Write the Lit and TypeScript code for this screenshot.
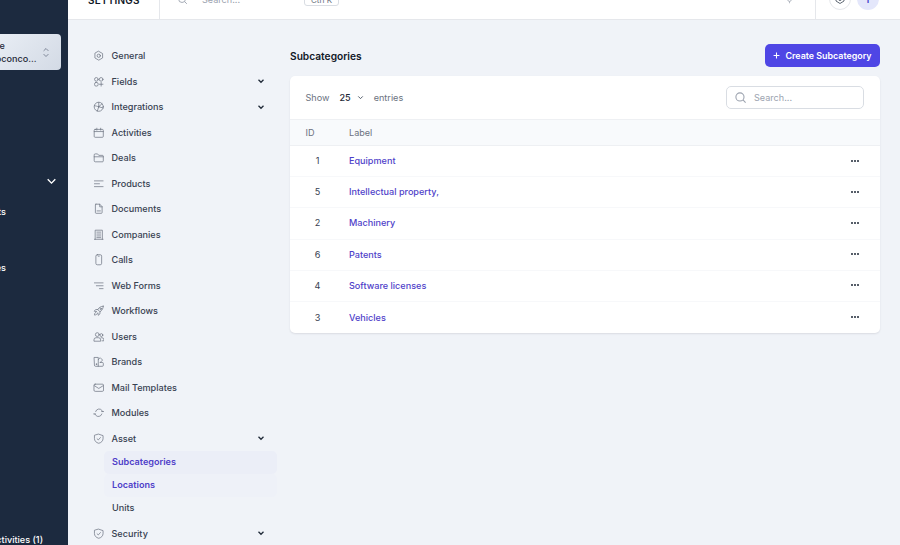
import { LitElement, html, css, svg } from "lit";
import { customElement } from "lit/decorators.js";

const icons: Record<string, unknown> = {
  gear: svg`<path d="M12 2.800l8 4.600v9.200l-8 4.600-8-4.600V7.400z"/><circle cx="12" cy="12" r="3.400"/>`,
  fields: svg`<circle cx="7" cy="7" r="3.800"/><circle cx="17" cy="7" r="3.800"/><rect x="3.200" y="13.500" width="7.500" height="7.500" rx="3"/><path d="M17 13.500v7.500M13.300 17.200h7.500"/>`,
  globe: svg`<circle cx="12" cy="12" r="9.500"/><path d="M12 12l7-6.500M12 12l9 2.500M12 12l-3 9M3 10c3 0 5 1 9 2M12 3v9"/>`,
  calendar: svg`<rect x="2.500" y="5" width="19" height="16.500" rx="2"/><path d="M2.500 9.500h19M8 2.500v4M16 2.500v4"/>`,
  folder: svg`<path d="M2.500 7V6a2 2 0 0 1 2-2h5l2.500 3h7.500a2 2 0 0 1 2 2v9.500a2 2 0 0 1-2 2h-15a2 2 0 0 1-2-2z"/><path d="M2.500 10h19"/>`,
  lines: svg`<path d="M3 6h18M3 12h10.500M3 18h18"/>`,
  doc: svg`<path d="M6 2.500h8l5 5V20a1.500 1.500 0 0 1-1.500 1.500h-11A1.500 1.500 0 0 1 5 20V4a1.500 1.500 0 0 1 1-1.500z"/><path d="M14 2.500V8h5M8.500 16.500h7"/>`,
  building: svg`<path d="M4.500 21.500V2.500h15v19M3 21.500h18M8 6.500h8M8 10.500h8M8 14.500h8M8 18h8"/>`,
  phone: svg`<rect x="6" y="1.500" width="12" height="21" rx="3"/><path d="M11 4.500h2"/>`,
  forms: svg`<path d="M3 6h18M7 12h14M13.500 18H21"/>`,
  rocket: svg`<path d="M21.500 2.500c-5 .3-9 2.500-11.500 7l4.500 4.500c4.500-2.500 6.700-6.500 7-11.500z"/><circle cx="16" cy="8" r="1.500"/><path d="M10 9.500H5.500L2.500 13l5 .8M14.500 14v4.500L11 21.500l-.8-5M6 15c-2 1-3 3.500-3 6 2.500 0 5-1 6-3"/>`,
  users: svg`<circle cx="9" cy="7.500" r="4"/><circle cx="17.500" cy="8.500" r="3"/><path d="M2 20.500v-2a4.500 4.500 0 0 1 4.500-4.500h5a4.500 4.500 0 0 1 4.500 4.500v2zM17 14h1.500a4 4 0 0 1 4 4v2.500H19"/>`,
  brands: svg`<path d="M3 3h8v18.500H5a2 2 0 0 1-2-2zM11 7.500l4-4 5 5-5.500 5.500M11 21.500h8.500a2 2 0 0 0 2-2v-4a2 2 0 0 0-2-2h-4"/><circle cx="7" cy="17" r=".8"/>`,
  mail: svg`<rect x="2" y="4.500" width="20" height="15" rx="2.500"/><path d="M2.500 7.500l9.500 6 9.500-6"/>`,
  sync: svg`<path d="M5.500 9.500a7.500 7.500 0 0 1 13-2.500l2 2.500M18.500 14.500a7.500 7.500 0 0 1-13 2.500l-2-2.500"/><path d="M22 9.500h-4M1.500 14.500h4"/>`,
  shield: svg`<path d="M12 2.500l9 3v6c0 5-3.500 8.500-9 10-5.500-1.500-9-5-9-10v-6z"/><path d="M8.500 12l2.500 2.500 4.500-5"/>`,
};

const navTop = [
  ["General", "gear", false],
  ["Fields", "fields", true],
  ["Integrations", "globe", true],
  ["Activities", "calendar", false],
  ["Deals", "folder", false],
  ["Products", "lines", false],
  ["Documents", "doc", false],
  ["Companies", "building", false],
  ["Calls", "phone", false],
  ["Web Forms", "forms", false],
  ["Workflows", "rocket", false],
  ["Users", "users", false],
  ["Brands", "brands", false],
  ["Mail Templates", "mail", false],
  ["Modules", "sync", false],
] as const;

const rows = [
  [1, "Equipment"],
  [5, "Intellectual property,"],
  [2, "Machinery"],
  [6, "Patents"],
  [4, "Software licenses"],
  [3, "Vehicles"],
];

const chevron = html`<svg class="chev" viewBox="0 0 24 24"><path d="M6 9l6 6 6-6" /></svg>`;
const search = html`<svg class="search-ic" viewBox="0 0 24 24"><circle cx="11" cy="11" r="7.500" /><path d="M16.500 16.500L21.500 21.500" /></svg>`;

@customElement("app-root")
export class AppRoot extends LitElement {
  static styles = css`
    :host {
      display: block;
      width: 900px;
      height: 545px;
      overflow: hidden;
      font-family: Inter, "Liberation Sans", sans-serif;
      font-size: 9.100px;
      color: #374151;
      background: #f0f3f8;
    }

    .page {
      display: grid;
      grid-template-columns: 68px 1fr;
      height: 565px;
      margin-top: -20px;
    }

    /* dark rail, mostly cut off on the left */
    .rail {
      background: #1c2a3f;
      color: #fff;
      overflow: hidden;
      display: flex;
      flex-direction: column;
      align-items: flex-end;
      font-weight: 500;
    }
    .account {
      width: 68px;
      height: 36px;
      margin-top: 54px;
      padding-right: 7.500px;
      box-sizing: border-box;
      display: flex;
      justify-content: flex-end;
      flex: none;
    }
    .account-card {
      flex: none;
      width: 100%;
      background: linear-gradient(135deg, #e8edf4, #d3dae5);
      border-radius: 0 4px 4px 0;
      color: #1f2937;
      display: flex;
      align-items: center;
      gap: 5px;
      justify-content: flex-end;
      padding-right: 11px;
      box-sizing: border-box;
      overflow: hidden;
    }
    .account-text {
      flex: none;
      line-height: 13px;
    }
    .account-text span {
      display: block;
      white-space: nowrap;
    }
    .updown {
      width: 8px;
      height: 11px;
      flex: none;
      fill: none;
      stroke: #7b8494;
      stroke-width: 1.200;
    }
    .rail-chev {
      width: 13px;
      height: 13px;
      fill: none;
      stroke: #fff;
      stroke-width: 2.600;
      margin: 105px 10.500px 0 0;
      flex: none;
    }
    .rail-item {
      white-space: nowrap;
      line-height: 12px;
      flex: none;
    }
    .r1 { margin: 17.500px 62px 0 0; }
    .r2 { margin: 44px 62px 0 0; }
    .r3 { margin: 260px 25px 0 0; }

    .main {
      display: grid;
      grid-template-rows: 40px 1fr;
      min-width: 0;
    }

    .top {
      background: #fff;
      border-bottom: 1px solid #e5e7eb;
      display: flex;
      align-items: center;
      box-sizing: border-box;
      color: #111827;
    }
    .title {
      width: 92px;
      box-sizing: border-box;
      padding-left: 20px;
      font-weight: 600;
      font-size: 10px;
      letter-spacing: 0.200px;
      align-self: stretch;
      display: flex;
      align-items: center;
      border-right: 1px solid #e5e7eb;
    }
    .top-search {
      display: flex;
      align-items: center;
      flex: 1;
      padding-left: 17px;
      color: #9ca3af;
    }
    .top-search .search-ic {
      width: 11px;
      height: 11px;
      margin-right: 14px;
    }
    .top-search .kbd {
      margin-left: 64px;
      width: 35px;
      height: 13px;
      border: 1px solid #d9dde3;
      border-radius: 3px;
      text-align: center;
      line-height: 13px;
      font-size: 8px;
      box-sizing: border-box;
      color: #6b7280;
    }
    .bug {
      width: 9px;
      height: 9px;
      margin-right: 21px;
      fill: none;
      stroke: #9ca3af;
      stroke-width: 2;
    }
    .top-right {
      align-self: stretch;
      border-left: 1px solid #e5e7eb;
      display: flex;
      align-items: center;
      gap: 6px;
      padding: 0 21px 0 13px;
    }
    .circle {
      width: 22px;
      height: 22px;
      border-radius: 50%;
      box-sizing: border-box;
      display: flex;
      align-items: center;
      justify-content: center;
      margin-top: -1px;
    }
    .circle.light {
      border: 1px solid #e5e7eb;
      background: #fff;
    }
    .circle.avatar {
      background: #e4e7fb;
      color: #4338ca;
      font-weight: 600;
    }
    .circle svg {
      width: 12px;
      height: 12px;
      fill: none;
      stroke: #374151;
      stroke-width: 1.600;
    }

    .body {
      display: grid;
      grid-template-columns: 222px 1fr;
      min-height: 0;
      overflow: hidden;
    }

    .settings {
      padding: 23px 0 0 24px;
      font-weight: 500;
    }
    .nav-row {
      display: flex;
      align-items: center;
      height: 25.500px;
      color: #374151;
    }
    .nav-row .ic {
      width: 11.500px;
      height: 11.500px;
      fill: none;
      stroke: #6b7280;
      stroke-width: 1.500;
      margin-left: 0.500px;
      margin-right: 7.500px;
      flex: none;
      stroke-linecap: round;
      stroke-linejoin: round;
    }
    .nav-row span {
      flex: 1;
    }
    .chev {
      width: 10px;
      height: 10px;
      fill: none;
      stroke: #1f2937;
      stroke-width: 3;
      margin-right: 24px;
      flex: none;
    }
    .sub {
      display: flex;
      flex-direction: column;
      margin: -0.500px 13px 1px 12px;
    }
    .sub div {
      height: 23px;
      line-height: 22px;
      padding-left: 8px;
      border-radius: 5px;
    }
    .sub .on {
      color: #4f3fc9;
      font-weight: 600;
    }
    .sub .cur {
      background: #ebeef7;
    }
    .sub .hov {
      background: #eef1f8;
    }

    .content {
      padding: 24px 20px 0 0;
    }
    .head {
      display: flex;
      align-items: center;
      justify-content: space-between;
      height: 23px;
      margin-bottom: 9px;
    }
    .head h1 {
      margin: 0;
      font-size: 10.200px;
      font-weight: 600;
      color: #111827;
    }
    .create {
      width: 115px;
      height: 23px;
      box-sizing: border-box;
      padding-left: 8px;
      background: #4f46e5;
      color: #fff;
      border-radius: 5px;
      display: flex;
      align-items: center;
      gap: 5.500px;
      font-weight: 600;
      font-size: 8.900px;
    }
    .create svg {
      width: 7px;
      height: 7px;
      stroke: #fff;
      stroke-width: 1.800;
      fill: none;
    }

    .card {
      background: #fff;
      border-radius: 5px;
      box-shadow: 0 1px 2px rgba(15, 23, 42, 0.1);
      overflow: hidden;
    }
    .toolbar {
      height: 43px;
      display: flex;
      align-items: center;
      padding: 0 16px 0 15.500px;
      border-bottom: 1px solid #eef0f3;
      color: #6b7280;
    }
    .toolbar .num {
      color: #1f2937;
      margin: 0 5px 0 10px;
      font-weight: 500;
    }
    .toolbar .chev {
      stroke: #4b5563;
      stroke-width: 2.500;
      width: 9px;
      height: 9px;
      margin: 0 9px 0 0;
    }
    .box {
      margin-left: auto;
      width: 138px;
      height: 23px;
      border: 1px solid #d9dde3;
      border-radius: 5px;
      box-sizing: border-box;
      display: flex;
      align-items: center;
      padding-left: 7px;
      color: #9ca3af;
    }
    .search-ic {
      width: 13px;
      height: 13px;
      fill: none;
      stroke: #9ca3af;
      stroke-width: 2;
      margin-right: 7px;
    }
    .thead, .row {
      display: grid;
      grid-template-columns: 59px 1fr 29px;
      align-items: center;
    }
    .thead {
      height: 25px;
      background: #f8fafc;
      border-bottom: 1px solid #eef0f3;
      color: #6b7280;
    }
    .thead div:first-child {
      padding-left: 15.500px;
    }
    .row {
      height: 31.200px;
      border-bottom: 1px solid #f7f8fa;
      box-sizing: border-box;
      padding-bottom: 1px;
    }
    .row:last-child {
      border-bottom: none;
    }
    .row .id {
      text-align: center;
      width: 55px;
      color: #374151;
    }
    .row a {
      color: #4f3fc9;
      font-weight: 500;
      text-decoration: none;
    }
    .dots {
      width: 8px;
      height: 2px;
      fill: #1f2937;
      display: block;
    }
  `;

  navRow(label: string, icon: string, chev: boolean) {
    return html`<div class="nav-row">
      <svg class="ic" viewBox="0 0 24 24">${icons[icon]}</svg>
      <span>${label}</span>
      ${chev ? chevron : ""}
    </div>`;
  }

  render() {
    return html`<div class="page">
      <aside class="rail">
        <div class="account">
          <div class="account-card">
            <div class="account-text"><span>John Doe</span><span>mail@doconco...</span></div>
            <svg class="updown" viewBox="0 0 10 12"><path d="M2 4l3-3 3 3M2 8l3 3 3-3" /></svg>
          </div>
        </div>
        <svg class="rail-chev" viewBox="0 0 24 24"><path d="M5 8l7 7 7-7" /></svg>
        <div class="rail-item r1">Assets</div>
        <div class="rail-item r2">Companies</div>
        <div class="rail-item r3">Activities (1)</div>
      </aside>
      <div class="main">
        <header class="top">
          <div class="title">SETTINGS</div>
          <div class="top-search">
            ${search}<span>Search...</span><span class="kbd">Ctrl K</span>
          </div>
          <svg class="bug" viewBox="0 0 24 24"><circle cx="12" cy="12" r="5" /><path d="M12 2v5M12 17v5M2 12h5M17 12h5" /></svg>
          <div class="top-right">
            <div class="circle light">
              <svg viewBox="0 0 24 24"><path d="M12 3l8 5v8l-8 5-8-5V8z" /><circle cx="12" cy="12" r="3" /></svg>
            </div>
            <div class="circle avatar">T</div>
          </div>
        </header>
        <div class="body">
          <nav class="settings">
            ${navTop.map(([l, i, c]) => this.navRow(l, i, c))}
            ${this.navRow("Asset", "shield", true)}
            <div class="sub">
              <div class="on cur">Subcategories</div>
              <div class="on hov">Locations</div>
              <div>Units</div>
            </div>
            ${this.navRow("Security", "shield", true)}
          </nav>
          <section class="content">
            <div class="head">
              <h1>Subcategories</h1>
              <div class="create">
                <svg viewBox="0 0 12 12"><path d="M6 1v10M1 6h10" /></svg>Create Subcategory
              </div>
            </div>
            <div class="card">
              <div class="toolbar">
                Show <span class="num">25</span> ${chevron} entries
                <div class="box">${search}<span>Search...</span></div>
              </div>
              <div class="thead"><div>ID</div><div>Label</div><div></div></div>
              ${rows.map(
                ([id, label]) => html`<div class="row">
                  <div class="id">${id}</div>
                  <div><a href="#">${label}</a></div>
                  <svg class="dots" viewBox="0 0 8 2"><circle cx="1" cy="1" r="1" /><circle cx="4" cy="1" r="1" /><circle cx="7" cy="1" r="1" /></svg>
                </div>`
              )}
            </div>
          </section>
        </div>
      </div>
    </div>`;
  }
}
